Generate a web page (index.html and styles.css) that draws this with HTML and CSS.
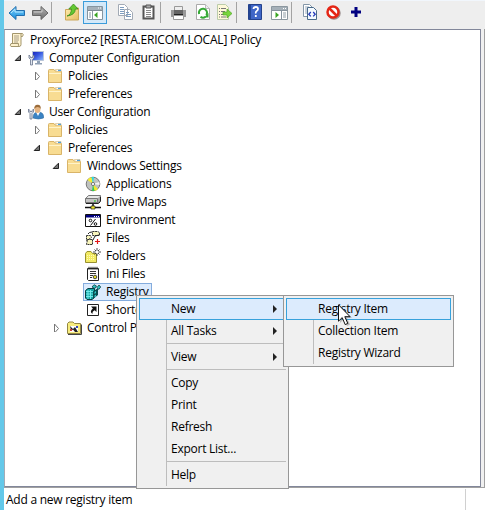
FILE: index.html
```
<!DOCTYPE html>
<html lang="en">
<head>
<meta charset="utf-8">
<title>Group Policy Management Editor</title>
<link rel="stylesheet" href="styles.css">
</head>
<body>
<svg class="defs" width="0" height="0" aria-hidden="true">
  <defs>
    <linearGradient id="gf" x1="0" y1="0" x2="1" y2="1"><stop offset="0" stop-color="#ffedae"/><stop offset="1" stop-color="#e5bd62"/></linearGradient>
    <linearGradient id="gb" x1="0" y1="0" x2="0" y2="1"><stop offset="0" stop-color="#7fd0fa"/><stop offset="1" stop-color="#168ddd"/></linearGradient>
    <linearGradient id="gg" x1="0" y1="0" x2="0" y2="1"><stop offset="0" stop-color="#b5b5b5"/><stop offset="1" stop-color="#6d6d6d"/></linearGradient>
    <linearGradient id="gs" x1="0" y1="0" x2="1" y2="1"><stop offset="0" stop-color="#1520b8"/><stop offset=".45" stop-color="#3758e0"/><stop offset="1" stop-color="#8fbcff"/></linearGradient>
    <symbol id="folder" viewBox="0 0 16 16"><path d="M1.500 2.500q0-1 1-1H7l1 1.500h5.500q1 0 1 1v10.500h-13z" fill="#f8dc92" stroke="#d9b468"/><path d="M8.500 1.500h5.500v2H9.500z" fill="#fff" stroke="#d2b373" stroke-width=".6"/><path d="M11 1.800h3v1.200h-3z" fill="#4aa0e0"/><path d="M2 5.500h12" stroke="#fff3c9"/></symbol>
    <symbol id="open" viewBox="0 0 8 8"><path d="M6.500 1.200v5.300H1.200z" fill="#777" stroke="#222"/></symbol>
    <symbol id="closed" viewBox="0 0 8 8"><path d="M2.500 0 6.500 4.500 2.500 9z" fill="#fff" stroke="#777"/></symbol>
    <symbol id="wrench" viewBox="0 0 8 12"><path d="M1 1v3l1.500 1.500V11h2V5.500L6 4V1L4.700 2.500v1H2.300v-1z" fill="#dfe5ef" stroke="#68748c" stroke-width=".8"/></symbol>
  </defs>
</svg>
<div class="window">
  <div class="toolbar">
    <svg class="tool back" width="18" height="16" viewBox="0 0 18 16"><path d="M1 8 8 1.500v4h8.500v5H8v4z" fill="url(#gb)" stroke="#226fae"/><path d="M3 8l4-3.800V7h8" fill="none" stroke="#b5e7ff"/></svg>
    <svg class="tool forward" width="18" height="16" viewBox="0 0 18 16"><path d="M17 8 10 1.500v4H1.500v5H10v4z" fill="url(#gg)" stroke="#666"/><path d="M3 7h8V4.500" fill="none" stroke="#ccc"/></svg>
    <i class="bar"></i>
    <svg class="tool up" width="16" height="18" viewBox="0 0 16 18"><path d="M1.500 6.500H7L8.500 5h6v12h-13z" fill="url(#gf)" stroke="#cca75a"/><path d="M3 13q4-1 4.500-7H4.800L9.500 1 14 6h-2.700q0 6-8.300 7z" fill="#64c832" stroke="#368c1c" stroke-width=".8"/></svg>
    <span class="pressed"><svg width="18" height="16" viewBox="0 0 18 16"><path d="M1.500 1.500h15v13h-15z" fill="#fff" stroke="#8695a0"/><path d="M2 2h14v3H2z" fill="#a6b1ba"/><path d="M2 5.500h14" stroke="#7f8b95"/><path d="M12 3h1m1 0h1" stroke="#fff"/><path d="M6.500 6v8" stroke="#8c9aa5"/><path d="M3 8h2M3 10h2M3 12h2" stroke="#8593a0"/><path d="M11.500 7v6L8 10z" fill="#3aa523"/></svg></span>
    <svg class="tool copy" width="17" height="16" viewBox="0 0 17 16"><path d="M1.500.5h6l3 3v8h-9zM7.500 5.500h5l3 3v7h-8z" fill="#fff" stroke="#a2aab5"/><path d="M3 3.500h4M3 5.500h4M3 7.500h4M3 9.500h4M9 8.500h3M9 10.500h5M9 12.500h5" stroke="#7d9cbe"/></svg>
    <svg class="tool clip" width="13" height="16" viewBox="0 0 13 16"><path d="M1.500 2.500h10v12h-10z" fill="#fff" stroke="#555" stroke-width="2"/><path d="M4 1h5v3H4z" fill="#aaa" stroke="#555"/><path d="M4 6.500h5M4 8.500h5M4 10.500h5M4 12.500h5" stroke="#888"/></svg>
    <i class="bar"></i>
    <svg class="tool print" width="17" height="16" viewBox="0 0 17 16"><path d="M4.500 1.500h8v4h-8z" fill="#eee" stroke="#999"/><path d="M1 5h15v7H1z" fill="#666"/><path d="M1 5h3v7H1zM13 5h3v7h-3z" fill="#999"/><path d="M3.500 10.500h10v4h-10z" fill="#fff" stroke="#999"/><path d="M4 9.500h9" stroke="#222"/></svg>
    <svg class="tool refresh" width="14" height="16" viewBox="0 0 14 16"><path d="M.5.500h9l4 4v11H.5z" fill="#fff" stroke="#aaa"/><path d="M9.500.5v4h4" fill="#eee" stroke="#bbb"/><path d="M3.200 10a4 4 0 1 1 7 1M9.500 12.800a4 4 0 0 1-5 0" fill="none" stroke="#35a935" stroke-width="2"/><path d="M12.500 9v4.500H8z" fill="#35a935"/></svg>
    <svg class="tool export" width="17" height="16" viewBox="0 0 17 16"><path d="M1.500.5h8l3 3v12h-11z" fill="#fff9da" stroke="#bca"/><path d="M3 4.500h1M5 4.500h5M3 7.500h1M5 7.500h4M3 10.500h1M5 10.500h3M3 13h1M5 13h5" stroke="#777"/><path d="M7 8h4V5l5 4.500-5 4.500v-3H7z" fill="#79d63d" stroke="#51a72b" stroke-width=".7"/></svg>
    <i class="bar"></i>
    <svg class="tool help" width="14" height="16" viewBox="0 0 14 16"><path d="M.5.500h13v15H.5z" fill="#3f66c7" stroke="#24428c"/><path d="M1 1h2v14H1z" fill="#234696"/><path d="M5.500 5q0-2 2.300-2T10 5q0 1.300-1.300 2T7.800 9.500M7.800 11v2" fill="none" stroke="#fff" stroke-width="1.800"/></svg>
    <svg class="tool pane" width="17" height="14" viewBox="0 0 17 14"><path d="M.5.500h16v13H.5z" fill="#fff" stroke="#8b979f"/><path d="M1 1h15v3H1z" fill="#a5b0b8"/><path d="M1 4.500h15M10.500 5v8" stroke="#85929d"/><path d="M12 2.500h1m1 0h1" stroke="#fff"/><path d="M12 7h3M12 9h3M12 11h3" stroke="#8f9ca5"/><path d="M4.500 6v6L8 9z" fill="#3aa523"/></svg>
    <i class="bar"></i>
    <svg class="tool xml" width="14" height="16" viewBox="0 0 14 16"><path d="M.5.500h6l3 3v9h-9z" fill="#fff" stroke="#8497a8"/><path d="M2 3h4M2 5h3M2 7h2M2 9h2" stroke="#9ab"/><path d="M4.500 3.500h6l3 3v9h-9z" fill="#f4faff" stroke="#496a8a"/><path d="m7.800 8-2 2.200 2 2.200M10.200 8l2 2.200-2 2.200" fill="none" stroke="#2338bb" stroke-width="1.300"/></svg>
    <svg class="tool stop" width="15" height="15" viewBox="0 0 15 15"><circle cx="8" cy="8" r="5.500" fill="none" stroke="#9a8f8f" stroke-width="2.500"/><circle cx="7" cy="7" r="5.500" fill="#fff" stroke="#e52616" stroke-width="2.500"/><path d="m3.500 3.500 7 7" stroke="#e52616" stroke-width="2.500"/></svg>
    <svg class="tool plus" width="10" height="10" viewBox="0 0 10 10"><path d="M5 0v10M0 5h10" stroke="#000080" stroke-width="3"/></svg>
  </div>
  <div class="workspace">
    <ul class="tree">
      <li class="row root"><svg class="icon" viewBox="0 0 16 16"><path d="M3.500 1.500h10q1.500 1 0 3h-1.500v8q0 2-2 2h-8q-1.500-1 0-3h1.500z" fill="#fff3cf" stroke="#a3966d"/><path d="M2 11.500h7.500q-.5 2 .5 3M12 4.500V1.500" fill="none" stroke="#a3966d"/><path d="M5 4h5M5 6h5M5 8h5M5 10h4" stroke="#a99f87"/></svg><span>ProxyForce2 [RESTA.ERICOM.LOCAL] Policy</span></li>
      <li class="row l1"><svg class="twist"><use href="#open"/></svg><svg class="icon" viewBox="0 0 16 16"><path d="M4.500 1.500h11v9h-11z" fill="url(#gs)" stroke="#b8c5d8"/><path d="M9 11h3v2h2v1.500H7V13h2z" fill="#8fa0b5"/><use href="#wrench" x="0" y="4" width="8" height="12"/></svg><span>Computer Configuration</span></li>
      <li class="row l2"><svg class="twist"><use href="#closed"/></svg><svg class="icon"><use href="#folder"/></svg><span>Policies</span></li>
      <li class="row l2"><svg class="twist"><use href="#closed"/></svg><svg class="icon"><use href="#folder"/></svg><span>Preferences</span></li>
      <li class="row l1"><svg class="twist"><use href="#open"/></svg><svg class="icon" viewBox="0 0 16 16"><path d="M5 14q0-6 5-6t5.500 4v2q-5 2-10.500 0z" fill="#3a83c4" stroke="#2e699d" stroke-width=".6"/><path d="m8 8 2 4 2-4z" fill="#fff"/><ellipse cx="9.500" cy="5" rx="3" ry="4" fill="#e5b583"/><path d="M6.300 5Q6 1 9.500.8T12.700 5q-1-2-3-2-2 0-3.400 2z" fill="#9b6c3b"/><use href="#wrench" x="-.5" y="4" width="8" height="12"/></svg><span>User Configuration</span></li>
      <li class="row l2"><svg class="twist"><use href="#closed"/></svg><svg class="icon"><use href="#folder"/></svg><span>Policies</span></li>
      <li class="row l2"><svg class="twist"><use href="#open"/></svg><svg class="icon"><use href="#folder"/></svg><span>Preferences</span></li>
      <li class="row l3"><svg class="twist"><use href="#open"/></svg><svg class="icon"><use href="#folder"/></svg><span>Windows Settings</span></li>
      <li class="row l4"><svg class="icon" viewBox="0 0 16 16"><circle cx="8" cy="8" r="6.800" fill="#bfc2bf" stroke="#777"/><path d="M8 8 2.500 4q1.500-2.500 4-3z" fill="#f4ec30"/><path d="M8 8 6.500 1H9z" fill="#30d8e0"/><path d="m8 8 5 5q-2 2-3.500 2z" fill="#f2e92d"/><path d="m8 8 1.500 7H7z" fill="#31c956"/><path d="m8 8 6.500-2v3z" fill="#f4f4f4"/><circle cx="8" cy="8" r="1.600" fill="#fff" stroke="#777"/></svg><span>Applications</span></li>
      <li class="row l4"><svg class="icon" viewBox="0 0 16 16"><path d="m.5 4.500 3-3h12v5l-2.500 2.500H.5z" fill="#aaa" stroke="#777"/><path d="m1 4.500 2.700-2.500H15l-2.500 2.500z" fill="#e6e6e6"/><path d="M.5 4.500h12v4H.5z" fill="#c5c5c5" stroke="#777"/><path d="M1 9.500h12.500l2-2V3" fill="none" stroke="#222"/><path d="M9 7h2" stroke="#18c018"/><path d="M8 10v3M0 13.500h16" stroke="#111" stroke-width="1.500"/><path d="M6 12h4v3H6z" fill="#efe52a" stroke="#222" stroke-width=".7"/></svg><span>Drive Maps</span></li>
      <li class="row l4"><svg class="icon" viewBox="0 0 16 16"><path d="M.5 2.500h15v12H.5z" fill="#fff" stroke="#111"/><path d="M1 3h14v2.500H1z" fill="#000080"/><path d="M9 4.500h1m1 0h1m1 0h1" stroke="#fff"/><path d="M10.500 7 5.500 13.500" stroke="#111"/><circle cx="5.500" cy="8.500" r="1.300" fill="none" stroke="#111"/><circle cx="10.500" cy="12" r="1.300" fill="none" stroke="#111"/></svg><span>Environment</span></li>
      <li class="row l4"><svg class="icon" viewBox="0 0 16 16"><path d="M7.500 1.500h5l2 1v3h-7zM1.500 5.500h4l1 2-3 2-2 1zM2.500 9.500h5v5h-6z" fill="#f7f4bb" stroke="#333" stroke-dasharray="2 .6"/><path d="M3 4q1-2 4-2M8 10l2-4 4-1" fill="none" stroke="#222"/><path d="M12.500 9v5M10 11.500h5" stroke="#e21616" stroke-width="1.200"/></svg><span>Files</span></li>
      <li class="row l4"><svg class="icon" viewBox="0 0 16 16"><path d="M.5 5.500 2 3.500h4l1.500 2h4v9H.5z" fill="#f2ea62" stroke="#98902f"/><path d="M2 7.500h8M2 9.500h8M2 11.500h8" stroke="#fffbb5" stroke-dasharray="1 1"/><path d="M12 0v8M8 4h8M9.500 1.500l5 5M14.500 1.500l-5 5" stroke="#333" stroke-width=".9"/><circle cx="12" cy="4" r="1.500" fill="#fff"/></svg><span>Folders</span></li>
      <li class="row l4"><svg class="icon" viewBox="0 0 16 16"><path d="M2.500 2.500h11v12h-10l-1-1z" fill="#fff" stroke="#222"/><path d="M4 .8v3M6 .8v3M8 .8v3M10 .8v3M12 .8v3" stroke="#222"/><path d="M5 5.500h6M5 7.500h6M5 9.500h3M5 11.500h2" stroke="#333"/><circle cx="10" cy="11" r="1.800" fill="#e6dd27" stroke="#444"/></svg><span>Ini Files</span></li>
      <li class="row l4 selected"><svg class="icon" viewBox="0 0 16 16"><path d="M.5 6.500 3 4.500h6.500v9L7 15.500H2L.5 14z" fill="#16a5a5" stroke="#073e43"/><path d="M1 7.500h7M1 10h7M1 12.500h7M3 6v9M5.500 6v9" stroke="#7ee" stroke-width=".9"/><path d="M8 7.500 13 4v7l-5 4z" fill="#064c50"/><path d="m9.500 8 1.500-1v2l-1.500 1zM9.500 11.500l1.500-1v2l-1.500 1z" fill="#2fc7c7"/><path d="m7 3 2-2.300L11.500 2 10 4.500zM12 3.500 14 1l1.700 2-2 2.500z" fill="#2fc7c7" stroke="#073e43" stroke-width=".8"/></svg><span>Registry</span></li>
      <li class="row l4"><svg class="icon" viewBox="0 0 16 16"><path d="M2.500 2.500h11v11h-11z" fill="#fff" stroke="#222"/><path d="M6 4.500h5.500V10L9.700 8.200Q7 9.500 7.500 12 4 9.500 7.900 6.400z" fill="#111"/></svg><span class="cut">Shortc</span></li>
      <li class="row l3"><svg class="twist"><use href="#closed"/></svg><svg class="icon" viewBox="0 0 16 16"><path d="M1.500 13.500V3.500L3 2h4l1.500 1.500h6v10z" fill="#f7ec7e" stroke="#938742"/><path d="M2 14.500h13.500v-10" fill="none" stroke="#444"/><path d="M4 6h8v6H4z" fill="#fff"/><path d="m4 6 3 3 2-2 3 5H9L7 9.500 5 11z" fill="#222"/><path d="M4 9h2v2H4z" fill="#d03a31"/><path d="M10 6h2v2h-2z" fill="#3545bb"/></svg><span class="cut wide">Control P</span></li>
    </ul>
    <i class="scroll"></i>
  </div>
  <div class="status"><span>Add a new registry item</span><i></i></div>
</div>
<div class="menu main">
  <div class="item hot">New<b></b></div>
  <div class="item">All Tasks<b></b></div>
  <hr>
  <div class="item">View<b></b></div>
  <hr>
  <div class="item">Copy</div>
  <div class="item">Print</div>
  <div class="item">Refresh</div>
  <div class="item">Export List...</div>
  <hr>
  <div class="item">Help</div>
</div>
<div class="menu sub">
  <div class="item hot">Registry Item</div>
  <div class="item">Collection Item</div>
  <div class="item">Registry Wizard</div>
</div>
<svg class="cursor" width="16" height="24" viewBox="0 0 16 24"><path d="M2 2v17l4-4 3 7 3-1.500-3-6.500h5z" fill="#777" opacity=".45"/><path d="M.5.800v16.400l3.700-3.600 3 7 2.600-1.200-3-6.700h5.300z" fill="#fff" stroke="#111"/></svg>
</body>
</html>
```
FILE: styles.css
```
* { box-sizing: border-box; }
body {
  margin: 0;
  width: 485px;
  height: 510px;
  overflow: hidden;
  position: relative;
  font: 12px/18px "Open Sans", "Noto Sans", sans-serif;
  letter-spacing: -0.25px;
  color: #000;
  background: #f0f0f0;
}
.defs { position: absolute; }
.window {
  height: 510px;
  border-left: 4px solid #64c8e9;
  display: flex;
  flex-direction: column;
}
.toolbar {
  height: 29px;
  flex: none;
  display: flex;
  align-items: flex-start;
  background: #eee;
  border-top: 1px solid #f1f6fc;
  padding-left: 4px;
}
.tool { flex: none; margin-top: 4px; }
.bar { width: 1px; height: 21px; margin-top: 1px; background: #a3a3a3; flex: none; }
.forward { margin: 4px 2px 0 5px; }
.up { margin: 2px 3px 0 12px; }
.pressed {
  width: 24px;
  height: 23px;
  border: 1px solid #3c9cda;
  background: #d4e9f9;
  display: grid;
  place-items: center;
  flex: none;
}
.copy { margin-left: 10px; margin-top: 3px; }
.clip { margin: 3px 5px 0 8px; }
.print { margin-left: 9px; }
.refresh { margin-left: 9px; margin-top: 3px; }
.export { margin: 3px 3px 0 6px; }
.help { margin-left: 11px; margin-top: 3px; }
.pane { margin: 5px 3px 0 9px; }
.xml { margin-left: 11px; margin-top: 3px; }
.stop { margin-left: 9px; margin-top: 4px; }
.plus { margin-left: 10px; margin-top: 6px; }
.workspace { height: 458px; flex: none; display: flex; justify-content: space-between; }
.tree {
  list-style: none;
  margin: 0;
  padding: 1px 0 0;
  width: 477px;
  border: 1px solid #82879a;
  border-left-color: #a4abb5;
  background: #fff;
}
.row { height: 18px; display: flex; align-items: center; white-space: nowrap; width: max-content; }
.row span { margin-left: 5px; }
.row .cut { width: 30px; overflow: hidden; }
.row .wide { width: 49px; }
.icon { width: 16px; height: 16px; flex: none; overflow: visible; }
.twist { width: 8px; height: 8px; margin-right: 6px; flex: none; overflow: visible; }
.root { margin-left: 4px; }
.root span { letter-spacing: -0.2px; }
.l1 { margin-left: 9px; }
.l2 { margin-left: 28px; }
.l3 { margin-left: 47px; }
.l4 { margin-left: 80px; }
.selected { margin-left: 78px; padding: 0 2px 0 1px; border: 1px solid #84acdd; background: #dcebfd; }
.scroll { width: 1px; background: #a0a0a0; }
.status {
  flex: 1;
  display: flex;
  justify-content: space-between;
  background: #fff;
  border-top: 1px solid #a0a0a0;
  border-bottom: 1px solid #a0a0a0;
  padding: 1px 19px 0 2px;
}
.status span { line-height: 22px; }
.status i { width: 1px; background: #d0d0d0; }
.menu { position: absolute; top: 295px; border: 1px solid #979797; padding: 2px; }
.main { left: 136px; width: 153px; background: linear-gradient(#bdbdbd, #bdbdbd) 29px 2px / 1px 188px no-repeat #f0f0f0; }
.sub { left: 283px; width: 171px; background: linear-gradient(#bdbdbd, #bdbdbd) 29px 2px / 1px 66px no-repeat #f0f0f0; }
.item {
  height: 22px;
  line-height: 22px;
  padding-left: 32px;
  display: flex;
  align-items: center;
  justify-content: space-between;
  white-space: nowrap;
}
.item b { border: 4px solid transparent; border-left-color: #222; border-right: 0; margin-right: 9px; }
.hot { background: #dcebfd; border: 1px solid #38a1db; padding-left: 31px; }
.hot b { margin-right: 8px; }
hr { margin: 1px 0 2px 28px; border: 0; height: 1px; background: #bdbdbd; }
.cursor { position: absolute; left: 338px; top: 304px; }
```
